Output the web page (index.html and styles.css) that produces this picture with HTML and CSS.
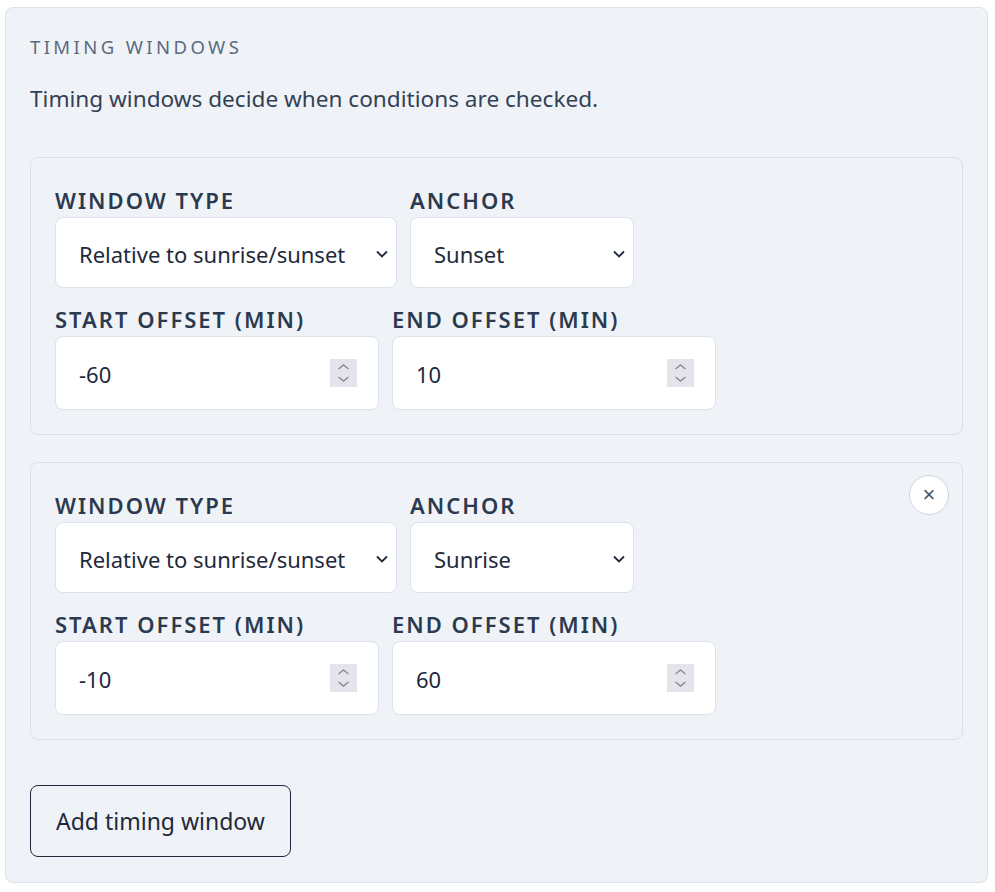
FILE: index.html
```html
<!DOCTYPE html>
<html lang="en">
<head>
  <meta charset="UTF-8">
  <meta name="viewport" content="width=device-width, initial-scale=1.0">
  <title>Timing windows</title>
  <link rel="stylesheet" href="styles.css">
</head>
<body>

  <section class="panel">
    <h3 class="panel-title">Timing windows</h3>
    <p class="panel-desc">Timing windows decide when conditions are checked.</p>

    <div class="window-card">
      <div class="field-row">
        <label class="field">
          <span class="field-label">Window type</span>
          <span class="select-wrap">
            <select class="select-type">
              <option>Relative to sunrise/sunset</option>
              <option>Fixed time of day</option>
            </select>
            <svg class="chevron" width="12" height="8" viewBox="0 0 12 8"><path d="M1 1.5 L6 6.5 L11 1.5" fill="none" stroke="#1e293b" stroke-width="1.8"/></svg>
          </span>
        </label>
        <label class="field">
          <span class="field-label">Anchor</span>
          <span class="select-wrap">
            <select class="select-anchor">
              <option selected>Sunset</option>
              <option>Sunrise</option>
            </select>
            <svg class="chevron" width="12" height="8" viewBox="0 0 12 8"><path d="M1 1.5 L6 6.5 L11 1.5" fill="none" stroke="#1e293b" stroke-width="1.8"/></svg>
          </span>
        </label>
      </div>
      <div class="field-row">
        <label class="field">
          <span class="field-label">Start offset (min)</span>
          <span class="num-wrap">
            <input type="number" value="-60">
            <svg class="spin" width="27" height="28" viewBox="0 0 27 28"><rect width="27" height="28" fill="#e5e4ea"/><path d="M8.5 10 L13.5 6 L18.5 10 M8.5 18 L13.5 22 L18.5 18" fill="none" stroke="#8d8b98" stroke-width="1.6"/></svg>
          </span>
        </label>
        <label class="field">
          <span class="field-label">End offset (min)</span>
          <span class="num-wrap">
            <input type="number" value="10">
            <svg class="spin" width="27" height="28" viewBox="0 0 27 28"><rect width="27" height="28" fill="#e5e4ea"/><path d="M8.5 10 L13.5 6 L18.5 10 M8.5 18 L13.5 22 L18.5 18" fill="none" stroke="#8d8b98" stroke-width="1.6"/></svg>
          </span>
        </label>
      </div>
    </div>

    <div class="window-card">
      <button class="remove-btn" title="Remove">&times;</button>
      <div class="field-row">
        <label class="field">
          <span class="field-label">Window type</span>
          <span class="select-wrap">
            <select class="select-type">
              <option>Relative to sunrise/sunset</option>
              <option>Fixed time of day</option>
            </select>
            <svg class="chevron" width="12" height="8" viewBox="0 0 12 8"><path d="M1 1.5 L6 6.5 L11 1.5" fill="none" stroke="#1e293b" stroke-width="1.8"/></svg>
          </span>
        </label>
        <label class="field">
          <span class="field-label">Anchor</span>
          <span class="select-wrap">
            <select class="select-anchor">
              <option>Sunset</option>
              <option selected>Sunrise</option>
            </select>
            <svg class="chevron" width="12" height="8" viewBox="0 0 12 8"><path d="M1 1.5 L6 6.5 L11 1.5" fill="none" stroke="#1e293b" stroke-width="1.8"/></svg>
          </span>
        </label>
      </div>
      <div class="field-row">
        <label class="field">
          <span class="field-label">Start offset (min)</span>
          <span class="num-wrap">
            <input type="number" value="-10">
            <svg class="spin" width="27" height="28" viewBox="0 0 27 28"><rect width="27" height="28" fill="#e5e4ea"/><path d="M8.5 10 L13.5 6 L18.5 10 M8.5 18 L13.5 22 L18.5 18" fill="none" stroke="#8d8b98" stroke-width="1.6"/></svg>
          </span>
        </label>
        <label class="field">
          <span class="field-label">End offset (min)</span>
          <span class="num-wrap">
            <input type="number" value="60">
            <svg class="spin" width="27" height="28" viewBox="0 0 27 28"><rect width="27" height="28" fill="#e5e4ea"/><path d="M8.5 10 L13.5 6 L18.5 10 M8.5 18 L13.5 22 L18.5 18" fill="none" stroke="#8d8b98" stroke-width="1.6"/></svg>
          </span>
        </label>
      </div>
    </div>

    <button class="add-btn">Add timing window</button>
  </section>

</body>
</html>
```

FILE: styles.css
```css
body {
  margin: 0;
  padding: 7px 7px 9px 5px;
  font-family: "Noto Sans", "Open Sans", sans-serif;
  background-color: #fff;
  color: #1e293b;
}
.panel {
  background: #eff3f7;
  border: 1px solid #dbe2ea;
  border-radius: 8px;
  padding: 27px 24px 25px 24px;
}
.panel-title {
  margin: 0;
  font-size: 18.5px;
  font-weight: 400;
  line-height: 24px;
  letter-spacing: 3.4px;
  text-transform: uppercase;
  color: #5b6b80;
}
.panel-desc {
  margin: 25px 0 43px;
  font-size: 22.6px;
  line-height: 30px;
  color: #334155;
}
.window-card {
  position: relative;
  border: 1px solid #d9e0e8;
  border-radius: 8px;
  padding: 27px 24px 24px 24px;
  margin-bottom: 27px;
  display: flex;
  flex-direction: column;
  gap: 16px;
}
.field-row {
  display: flex;
  gap: 13px;
}
.field {
  display: flex;
  flex-direction: column;
  gap: 2px;
}
.field-label {
  font-size: 22px;
  line-height: 30px;
  font-weight: 600;
  letter-spacing: 2px;
  text-transform: uppercase;
  color: #2c3a4f;
}
.select-wrap, .num-wrap {
  position: relative;
  display: block;
}
select, input {
  font-family: inherit;
  font-size: 22px;
  color: #1e293b;
  background: #fff;
  border: 1px solid #dbe2ea;
  border-radius: 8px;
  box-sizing: border-box;
  display: block;
}
select {
  -webkit-appearance: none;
  appearance: none;
  height: 71px;
  padding: 2px 30px 0 23px;
}
.chevron {
  position: absolute;
  right: 9px;
  top: 33px;
  pointer-events: none;
}
.select-type {
  width: 342px;
}
.select-anchor {
  width: 224px;
}
input {
  width: 324px;
  height: 74px;
  padding: 2px 20px 0 23px;
}
input::-webkit-inner-spin-button,
input::-webkit-outer-spin-button {
  -webkit-appearance: none;
  margin: 0;
}
.spin {
  position: absolute;
  right: 22px;
  top: 23px;
  pointer-events: none;
}
.remove-btn {
  position: absolute;
  top: 12px;
  right: 13px;
  width: 40px;
  height: 40px;
  border-radius: 50%;
  border: 1px solid #cbd5e1;
  background: #fff;
  color: #475569;
  font-size: 22px;
  line-height: 1;
  padding: 0;
  cursor: pointer;
}
.add-btn {
  display: block;
  margin-top: 45px;
  font-family: inherit;
  font-size: 23px;
  color: #1e293b;
  background: transparent;
  border: 1px solid #1e293b;
  border-radius: 8px;
  padding: 0 25px;
  height: 72px;
  cursor: pointer;
}
```
